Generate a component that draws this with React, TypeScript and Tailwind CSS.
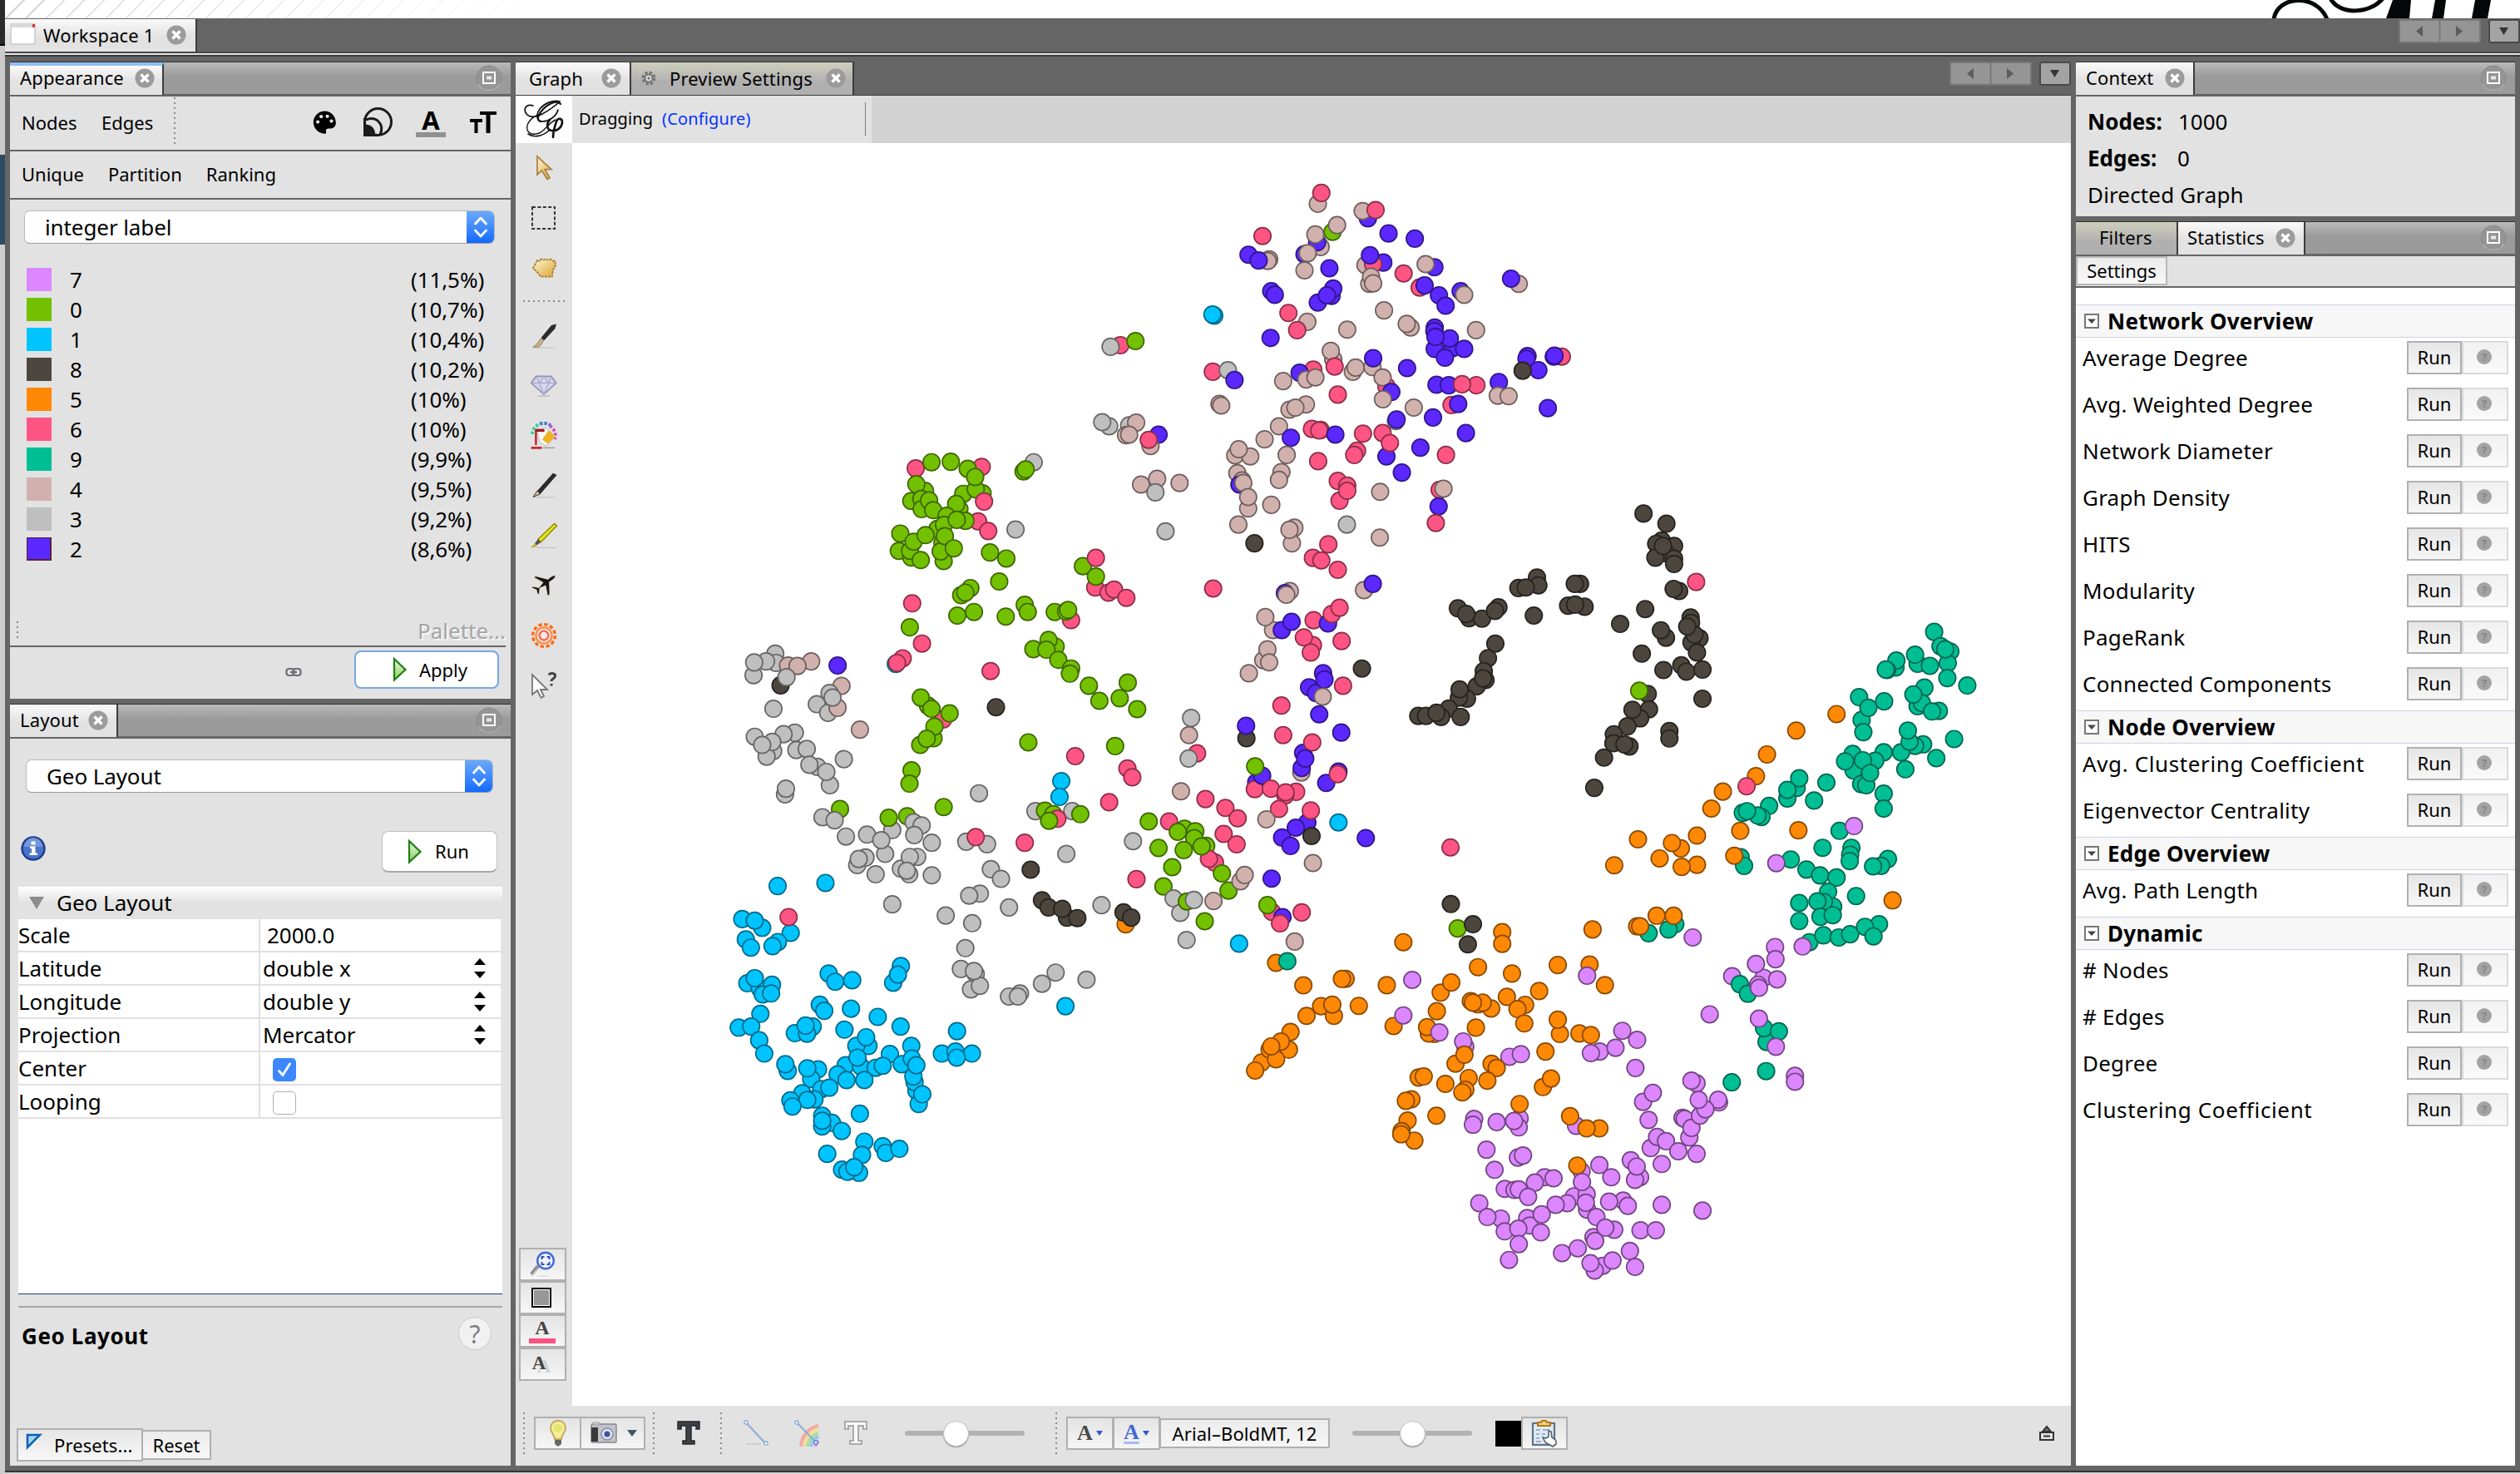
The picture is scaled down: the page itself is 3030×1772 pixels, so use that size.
import React from "react";

type Tile = { x: number; y: number; sx: number; sy: number; nodes: string };

const FILL: Record<string, string> = {
  v: "#dc86ff", g: "#73c000", b: "#00c4ff", k: "#4c463e", o: "#ff8805",
  p: "#ff5584", t: "#00be94", r: "#d1b1ae", s: "#bfbfbf", u: "#5b28ff",
};
const EDGE: Record<string, string> = {
  v: "#714680", g: "#3d6700", b: "#006a8a", k: "#26231f", o: "#8a4a03",
  p: "#8c2f48", t: "#006650", r: "#6f5f5d", s: "#666666", u: "#311689",
};

const TILES: Tile[] = [
  {
    x: 860, y: 500, sx: 2.8, sy: 1.6333,
    nodes: `p675,103 g728,91 g793,90 p897,100 g850,104 g900,152 g835,153 g877,144 g875,120 g706,147 g677,134 g660,167 g694,163 g695,183 g720,166 g822,183 g811,173 g734,185 p905,168 p885,207 p919,226 g779,196 g842,206 g748,222 g770,214 g813,204 g623,231 g618,265 g660,278 g656,265 g668,247 g708,234 g692,283 g765,249 g769,285 g759,266 g773,236 g803,260 g925,268 g980,280 s1011,223 s1072,91 g1038,109 g1045,105
g956,325 g859,338 g828,352 g842,347 g815,392 g871,385 g978,394 g1042,371 g1052,385 g1143,385 p1198,401 g1181,384 g1188,381
p663,368 g655,415 p696,447 b608,487 p631,476 p612,485 p927,501 g1071,458 g1146,453 g1122,440 g1115,459 g1155,479 g1198,496 g1194,506 k945,572 g1054,641 p1212,668
s129,509 s202,467 s205,485 s171,482 s131,484 r245,490 r323,482 r277,491 k220,529 s240,513 u412,490 s196,575 r425,530 s385,544 s342,566 s380,583 r412,573 s395,553 r487,616
s133,630 s268,622 s230,625 s195,658 s173,669 s192,640 s158,646 s273,656 s308,654 s344,689 s317,685 s386,725 s374,699 s433,674 s235,743 s238,732
g716,569 g692,553 p767,596 g728,575 g789,584 g735,633 g738,610 g690,646 g712,634 g661,696 g654,722
s888,741 g769,768 g420,772 s361,788 s402,794 s440,826 s511,822 s596,813 g584,789 g646,786 s668,798 s695,804 s670,823 s729,838 s572,860 s559,833 s478,882 s506,867 s483,870 s540,900 s625,889 s680,866 s655,866 s653,900 s645,893 s729,902 s596,959
s845,836 s915,841 p877,827 p1042,838 b1165,717 b1159,748 s1078,776 g1110,775 g1138,782 s1202,776 p1152,791 g1124,795 g1229,782 s1182,860 k1062,891
s928,890 s962,909 s891,938 s855,942 s989,965 s776,981 s865,996 s842,1045 s827,1086 s877,1096 s861,1126 s891,1119 s871,1090 s989,1140 s1026,1134 s1019,1140 s1100,1115 s1146,1093 s1250,1107 b1179,1159
k1100,951 k1122,965 k1184,985 k1168,968 k1219,986
b210,923 b371,917 b91,988 b158,1005 b133,991 b254,1015 p247,984 b103,1028 b120,1044 b211,1033 b193,1041 b108,1114 b150,1124 b133,1104 b191,1117 b160,1136 b188,1134 b152,1174 b79,1201 b121,1199 b148,1226 b165,1252
b382,1095 b404,1111 b461,1108 b625,1080 b599,1113 b615,1097 b352,1156 b367,1168 b457,1164 b547,1180 b624,1199 b435,1205 b328,1199 b268,1212 b309,1213 b304,1197
b244,1286 b236,1273 b516,1237 b475,1237 b508,1220 b439,1275 b490,1277 b540,1280 b479,1260 b588,1253 b564,1276 b628,1273 b660,1237 b412,1293 b442,1304 b502,1304 b346,1283 b323,1302 b310,1281 b357,1322 b384,1319 b334,1342 b293,1330 b253,1344 b310,1343 b260,1356
b662,1262 b677,1325 b671,1308 b667,1297 b677,1275 b685,1351 b697,1332 b487,1370 b360,1374 b393,1388 b360,1395 b360,1384 b426,1404 b377,1449 b502,1425 b494,1451 b564,1434 b574,1447 b620,1439 b427,1480 b484,1486 b445,1484 b468,1475
b814,1208 b763,1252 b809,1248 b864,1252 b813,1260`,
  },
  {
    x: 1300, y: 180, sx: 2.3758, sy: 1.6,
    nodes: `r676,104 p686,83 u819,132 r804,118 p841,116 p518,166 r684,187 u674,178 g718,158 r669,163 r731,145 u638,201 r647,199 r638,232 u878,161 u953,171 u478,202 r537,211 r533,214 u507,213 u709,228
u543,272 u553,279 u715,281 u720,267 u676,294 u702,280 r812,222 u863,217 p834,220 u825,203 r823,258 r828,244 r834,257 p921,238 u1009,226 r984,220 p967,265 u981,261 u1022,280 u1041,300 u1084,272 r1094,279 r1250,258 u1228,248
p592,314 r646,331 p617,347 r865,309 r760,346 r941,342 r930,335 r1128,347 u541,362 b380,319 b375,317 u1010,342 u1010,383 u1009,349 u1060,382 u1053,363 u1012,360 u1094,383 u1039,400
p112,376 s84,379 g155,368 p376,427 s419,424 u438,443 r395,489 r400,492
r720,403 r713,387 p663,423 u624,429 r577,445 r643,442 r669,438 p724,417 r776,427 r784,419 r832,418 u834,401 p872,455 r861,438 u886,466 r862,480 u931,420 p733,471
u1275,397 u1272,402 u1306,424 k1261,425 p1373,398 u1350,398 u1352,396 u1015,452 u1050,453 p1129,453 p1088,451 r950,496 p1058,491 u1077,489 u1193,447 r1190,473 r1221,474 u1333,497 u1099,545
s899,522 u901,519 u1005,515 u969,573 u916,621 r642,490 r595,500 r612,496 r565,532 r524,557 u599,554 p684,539 p659,537 p680,540 u726,548 p805,546 p861,545 u872,590 p882,564 p788,579 p780,587 p677,599 p1042,587
r440,588 r483,590 r450,576 r587,587 r572,620 r565,635 r446,622 r460,636 u452,644 r463,641 r477,690 r477,668 r449,721 r543,683 p733,637 p760,646 p738,675 p760,656 r854,658 p1024,654 r1035,652 u1021,686 p1013,718
r609,727 r602,757 r595,731 s759,721 k495,757 r853,746 p706,759 p662,785 p686,790 p733,808 p377,844 r596,849 u582,853 r586,856 r808,847 u833,835
r548,924 r526,899 u573,924 u601,908 p664,905 u705,911 p716,893 p738,881 p662,953 p636,938 p656,967 p744,945 r520,982 r532,961 r537,986 r479,1007 u691,1007 u651,1034 u671,1045 u695,1019 r690,1052 p748,1031 k802,998 u680,1086
p572,1069 p577,1126 s314,1093 r308,1126 p331,1161 s307,1171 k472,1132 u471,1108 u743,1121 u634,1160 p660,1140 r629,1198 u630,1189 u640,1171 u735,1196 u700,1218 p733,1201 u500,1217 p496,1230 u517,1204 g497,1186 p542,1229 p614,1235 p583,1242 p584,1236 p565,1268 r529,1288 r285,1234 p355,1249 p412,1266 p447,1286 p407,1316 p444,1336
u646,1294 p656,1271 u613,1304 u574,1323 u598,1339 k658,1320 r662,1372 b735,1294 u813,1324 u544,1402 p1055,1342 p251,1292 g193,1292 g295,1306 g326,1311 g276,1312 g323,1324 g357,1339 p382,1371 p365,1364 g344,1340 g293,1347 g221,1343 g260,1380 g402,1392 g421,1425 r455,1407 r467,1395 r378,1445 g235,1417 s264,1440 s283,1468 g302,1446 s322,1443 g353,1484 s301,1520 s148,1330 p158,1403 s58,1453 o127,1490 k121,1467 k143,1477
p545,1466 g532,1453 u575,1476 p568,1488 p630,1467 b451,1527 r610,1523
s80,532 s60,524 s137,530 r128,549 r157,525 r137,548 u221,548 r198,570 p193,558 r217,633 r171,644 s212,659 r281,641 s241,734 g5,801 p40,842 p42,785 g42,821 p78,852 p94,846 p129,862
g22,1031 g52,1060 g133,1025 g110,1055 g160,1076 g97,1147 p132,1190 p146,1207 p80,1255
k1076,882 k1108,901 k1145,902 k1100,893 k1192,880 k1182,887 k1249,843 k1302,823 k1306,838 k1270,842 k1425,835 k1410,835 k1293,896 k1391,877 k1438,879 k1411,875 k1183,950 k1162,978 k1150,1003 k1155,1020 k1130,1032 k1148,1017 k1102,1056 k1079,1054 k1081,1038 k1050,1075 k963,1089 k985,1089 k1028,1091 k1015,1083 k1084,1091`,
  },
  {
    x: 1620, y: 560, sx: 1.96, sy: 1.568,
    nodes: `k698,90 k752,109 k741,141 k770,151 k728,147 k752,165 k726,173 k770,175 k744,151 k770,185 k782,236 k769,232 p822,219 k702,270 k643,298 k751,324 k739,310 k694,354 k809,286 k830,325 k811,333 k810,296 k818,318 k801,303 k824,352 k745,385 k787,376 k799,388 k837,384 k837,439
k708,430 g688,424 k711,459 k690,476 k672,460 k660,491 k628,506 k627,523 k665,529 k653,525 k605,550 k582,607 k759,500 k759,514
o1153,468 o1058,499 o989,544 o963,585 p941,604 o885,614 o858,646 o926,688 o1063,687 t927,738 t935,754 o912,735 t1045,742 v1011,749 o824,697 o685,704 o786,721 o765,711 o736,740 o824,752 o788,756 o629,753 o1285,819
o683,868 t710,881 o690,868 t773,864 t757,874 o729,848 o769,848 o578,874 v814,889 k244,826 g260,872 k296,864 k284,902
o132,898 o365,879 o365,901 o308,945 v153,969 o93,979 o388,957 o496,941 o571,940 v565,961 o607,979 o-4,967 o27,1018 o220,993 o245,974 o376,1001 o452,990 o419,1016 o401,1024 o308,1015 o339,1023 o319,1012 o291,1009 o296,1012 o417,1051 o211,1028 o303,1059 o501,1071 o496,1044 o547,1070 o574,1073 o109,1056 v132,1036 o205,1071 o192,1070 o188,1058 v217,1068 v278,1095 v273,1085 o255,1127 o276,1110 v382,1114 v409,1109 o467,1104 v595,1104 v574,1107 v632,1097 v648,1065 v683,1082 v679,1135
o340,1127 o352,1135 o330,1159 o286,1154 o278,1176 o271,1181 o231,1165 o168,1153 o180,1151 o461,1171 o480,1155 o151,1194 o138,1197 o210,1225 o142,1234 o128,1254 o158,1272 o127,1260
v299,1231 v296,1242 v352,1237 v406,1230 v404,1247 v393,1235 o406,1203 v539,1244 o525,1226 o594,1249 o564,1249 v328,1289 v402,1304 v414,1300 v347,1327 v594,1318 v552,1330 o542,1319 v622,1341 v668,1309 v690,1341 v678,1346 v682,1321
v465,1341 v486,1343 v442,1351 v371,1363 v394,1365 v404,1364 v426,1378 v534,1377 v564,1373 v553,1350 v518,1390 v491,1393 v565,1402 v562,1389 v650,1385 v617,1387 v661,1395 v741,1393 v741,1316 v715,1286 v730,1265 v751,1273 v780,1292 v823,1297 v806,1266 v790,1229 v795,1231 v811,1248
v837,1404 v311,1390 v362,1419 v330,1416 v371,1443 v424,1418 v430,1432 v458,1411 v403,1438 v456,1445 v404,1467 v381,1497 v587,1416 v629,1440 v580,1454 v608,1436 v584,1461 v506,1484 v543,1475 v691,1441 v727,1441 v666,1480 v678,1510 v602,1508 v583,1517 v573,1503 v625,1498
v697,1199 v720,1182 v710,1233 v823,1164 v811,1159 v876,1200 v874,1195 v831,1225 v844,1213 v828,1195 v854,1034 v1055,1150 v1055,1161 t906,1162 t987,1141 t988,1086 t982,1060 v970,1042 t1017,1066 v1010,1095 v907,962 t925,977 t944,995 v981,965 v963,939 v1008,907 v1009,930 v968,978 v970,984 v1013,968
t1089,898 v1073,906 t1122,885 t1158,889 t1185,883 t1253,864 t1220,869 t1240,887
t1383,313 t1398,340 t1421,350 t1415,372 t1409,346 t1344,373 t1338,356 t1373,377 t1414,400 t1461,414 t1292,380 t1294,367 t1272,385 t1269,384 t1206,436 t1265,444 t1212,479 t1228,456 t1216,502 t1360,418 t1344,453 t1354,447 t1334,431 t1394,462 t1378,463 t1430,515 t1388,551 t1315,572 t1357,525 t1338,528 t1305,540 t1325,520 t1321,499 t1264,540 t1191,543 t1244,556 t1193,574 t1173,557 t1215,555 t1211,600 t1223,602 t1232,579 t1264,618 t1264,646
t1059,607 t1065,589 t1037,627 t1037,611 t1129,597 t1100,631 t994,641 t976,662 t932,654 t967,659 t942,651 t1160,688 v1194,679 t1120,720 t1188,720 t1185,733 t1184,745 t1274,741 t1258,754 t1239,755 t1082,761 t1114,772 t1153,776 t1133,803 t1199,811 t1065,824 t1145,831 t1123,822 t1108,821 t1115,850 t1144,847 t1065,858`,
  },
  {
    x: 0, y: 0, sx: 0.5175, sy: 0.5175,
    nodes: `o794,599 t801,598 o811,613 o835,609 o822,626 o830,632 o829,625 o813,632 o803,642 o802,653 o797,648 o785,661 o790,653 o781,666 o794,659 o791,651`,
  },
];

function Graph() {
  const dots: React.ReactElement[] = [];
  TILES.forEach((t, i) =>
    t.nodes.split(/\s+/).forEach((n, j) => {
      const c = n[0];
      const [a, b] = n.slice(1).split(",").map(Number);
      dots.push(
        <circle key={`${i}-${j}`} cx={t.x + a / t.sx - 688} cy={t.y + b / t.sy - 172} r={10.2} fill={FILL[c]} stroke={EDGE[c]} strokeWidth={1.7} />
      );
    })
  );
  return <svg width="1802" height="1518" className="block">{dots}</svg>;
}

const Close = () => (
  <svg width="24" height="24" viewBox="0 0 24 24" className="shrink-0">
    <circle cx="12" cy="12" r="11.5" fill="#9b9b9b" />
    <path d="M7.5 7.5l9 9M16.5 7.5l-9 9" stroke="#fff" strokeWidth="3.4" />
  </svg>
);

const Maximize = () => (
  <svg width="32" height="32" viewBox="0 0 32 32" className="shrink-0">
    <circle cx="16" cy="16" r="15" fill="#959595" stroke="#8a8a8a" />
    <path d="M3 23a15 15 0 0 0 26 0" fill="none" stroke="#b0b0b0" strokeWidth="1.5" />
    <rect x="9" y="9" width="14" height="13" fill="none" stroke="#fff" strokeWidth="2" />
    <rect x="13" y="13.5" width="6" height="4" fill="#e8e8e8" />
  </svg>
);

function Tab({ label, w, focus, idle, x = "pl-[13px]", gap = "gap-[11px]", icon, close = true }: { label: string; w: string; focus?: boolean; idle?: boolean; x?: string; gap?: string; icon?: React.ReactNode; close?: boolean }) {
  return (
    <div className={`${w} ${x} flex h-[39px] shrink-0 items-center border-r-2 border-[#3c3c3c] ${gap} ${idle ? "bg-linear-to-b from-[#cfcfbd] to-[#b0b0b0] to-60%" : "bg-linear-to-b from-[#fafafa] to-[#e2e2e2] to-55%"} ${focus ? "border-t-4 border-t-[#8fbdf5] pb-[5px]" : "pb-px"}`}>
      {icon}
      <span className="-mt-px text-[22px] leading-none tracking-[0.15px]">{label}</span>
      {close && <Close />}
    </div>
  );
}

function PanelBar({ children }: { children: React.ReactNode }) {
  return (
    <div className="h-[42px] shrink-0 border-b-[3px] border-[#656565] bg-[#9b9b9b]">
      <div className="flex h-[39px] items-center border-t border-[#333] bg-linear-to-b from-[#bababa] to-[#9b9b9b] to-45%">
        {children}
        <div className="flex-1" />
        <div className="mr-[10px]"><Maximize /></div>
      </div>
    </div>
  );
}

function NavButtons() {
  return (
    <div className="flex items-start gap-[9px]">
      <svg width="99" height="29" viewBox="0 0 99 29">
        <rect x="1" y="1" width="97" height="27" rx="2" fill="#959595" stroke="#777" strokeWidth="2" />
        <path d="M49.500 0V29" stroke="#777" strokeWidth="2" />
        <path d="M29 8v13l-8-6.500zM69 8v13l8-6.500z" fill="#5c5c5c" />
      </svg>
      <svg width="38" height="29" viewBox="0 0 38 29">
        <rect x="1" y="1" width="36" height="27" rx="2" fill="#a3a3a3" stroke="#4a4a4a" strokeWidth="2" />
        <path d="M13 10h11l-5.500 9z" fill="#333" />
      </svg>
    </div>
  );
}

function Combo({ label, cls }: { label: string; cls: string }) {
  return (
    <div className={`${cls} flex h-10 items-stretch overflow-hidden rounded-[7px] border border-[#b9b9b9] border-b-[#9a9a9a] bg-white`}>
      <div className="flex flex-1 items-center pb-px pl-6 text-[26px] leading-none tracking-[-0.1px]">{label}</div>
      <div className="-my-px -mr-px flex w-[34px] items-center justify-center bg-linear-to-b from-[#6cabfa] to-[#0a66ff]">
        <svg width="18" height="26" viewBox="0 0 18 26" fill="none" stroke="#fff" strokeWidth="2.800" strokeLinecap="round" strokeLinejoin="round">
          <path d="M2.500 9L9 2l6.500 7M2.500 17L9 24l6.500-7" />
        </svg>
      </div>
    </div>
  );
}

const Play = () => (
  <svg width="20" height="30" viewBox="0 0 20 30">
    <defs><linearGradient id="play" x1="0" y1="0" x2="0" y2="1"><stop offset="0" stopColor="#f0fae8" /><stop offset="1" stopColor="#86cc58" /></linearGradient></defs>
    <path d="M2 2l13.500 13L2 27.500z" fill="url(#play)" stroke="#1f8010" strokeWidth="2.200" />
  </svg>
);

const LEGEND = [
  ["bg-[#dc86ff]", "7", "(11,5%)"], ["bg-[#73c000]", "0", "(10,7%)"], ["bg-[#00c4ff]", "1", "(10,4%)"],
  ["bg-[#4c463e]", "8", "(10,2%)"], ["bg-[#ff8805]", "5", "(10%)"], ["bg-[#ff5584]", "6", "(10%)"],
  ["bg-[#00be94]", "9", "(9,9%)"], ["bg-[#d1b1ae]", "4", "(9,5%)"], ["bg-[#bfbfbf]", "3", "(9,2%)"],
  ["bg-[#5b28ff] border border-[#5a2038] border-r-2 border-b-2", "2", "(8,6%)"],
];

function Appearance() {
  return (
    <section className="flex h-[766px] flex-col bg-[#e2e2e2]">
      <PanelBar><Tab label="Appearance" w="w-[185px]" x="pl-[12px]" gap="gap-[13px]" focus /></PanelBar>
      <div className="flex h-[66px] shrink-0 items-center border-b-2 border-[#656565] pb-[2px] pl-[14px] text-[22px]">
        <span className="w-[96px]">Nodes</span>
        <span className="w-[87px]">Edges</span>
        <span className="h-[60px] w-[2px] bg-[repeating-linear-gradient(to_bottom,#8a8a8a_0px,#8a8a8a_2px,transparent_2px,transparent_6px)]" />
        <div className="ml-[162px] flex items-center">
          <svg width="34" height="34" viewBox="0 0 16 16">
            <path d="M8 1.600a6.500 6.300 0 1 0 .8 12.800c.6-.4-.1-1.300.1-2 .3-.9 1.200-.9 2.300-.9 2 0 3.300-1.200 3.300-3.200C14.500 4.300 11.600 1.600 8 1.600z" fill="#000" />
            <g fill="#e2e2e2"><circle cx="4.300" cy="7.800" r="1" /><circle cx="6.200" cy="4.800" r="1" /><circle cx="9.700" cy="4.600" r="1" /><circle cx="12" cy="7.300" r="1" /></g>
          </svg>
          <svg width="38" height="38" viewBox="0 0 38 38" className="ml-[28px]">
            <circle cx="19.500" cy="18.500" r="16" fill="none" stroke="#1b1b1b" strokeWidth="3" />
            <path d="M3 14v21h18" fill="none" stroke="#1b1b1b" strokeWidth="2" />
            <path d="M5 16c12-5 23 5 17 18" fill="none" stroke="#1b1b1b" strokeWidth="3" />
            <path d="M3 22c8-1 14 4 13 14H3z" fill="#1b1b1b" />
          </svg>
          <div className="ml-[27px] flex w-9 flex-col items-center">
            <span className="text-[31px] font-bold leading-[29px]">A</span>
            <span className="h-[6px] w-full bg-[#919191]" />
          </div>
          <svg width="34" height="32" viewBox="0 0 34 32" className="ml-[28px]">
            <path d="M1 12h15v4h-5.500v13h-4V16H1zM13 3h20v4h-7.500v22h-5V7H13z" fill="#000" />
          </svg>
        </div>
      </div>
      <div className="flex h-[58px] shrink-0 items-center gap-[29px] border-b-2 border-[#656565] pb-[2px] pl-[14px] text-[22px]">
        <span>Unique</span><span>Partition</span><span>Ranking</span>
      </div>
      <Combo label="integer label" cls="ml-[17px] mt-[13px] w-[566px] shrink-0" />
      <div className="mt-[29px] flex flex-col gap-2 pl-5 text-[26px]">
        {LEGEND.map(([c, l, p]) => (
          <div key={l} className="flex h-7 items-center">
            <span className={`${c} h-7 w-[30px]`} />
            <span className="ml-[22px] w-[410px] leading-none">{l}</span>
            <span className="leading-none tracking-[-0.1px]">{p}</span>
          </div>
        ))}
      </div>
      <div className="flex-1" />
      <div className="mr-[6px] flex h-9 shrink-0 items-start justify-between border-b-2 border-[#656565] pl-2">
        <span className="mt-[5px] h-[20px] w-[2px] bg-[repeating-linear-gradient(to_bottom,#8a8a8a_0px,#8a8a8a_2px,transparent_2px,transparent_6px)]" />
        <span className="text-[26px] leading-[32px] text-[#a5a5a5] [text-shadow:2px_2px_0_#f6f6f6]">Palette...</span>
      </div>
      <div className="flex h-[62px] shrink-0 items-center justify-end pr-[14px]">
        <svg width="20" height="14" viewBox="0 0 20 14" className="mr-[63px]" fill="none" stroke="#6c6f75" strokeWidth="2.200">
          <rect x="1.500" y="2" width="9" height="8" rx="3" /><rect x="9.500" y="2" width="9" height="8" rx="3" /><path d="M6 6h8" />
        </svg>
        <div className="-mt-2 flex h-[46px] w-[174px] items-center justify-center gap-3 rounded-[8px] border-2 border-[#76a8e4] bg-white pl-2 text-[22px]"><Play />Apply</div>
      </div>
    </section>
  );
}

const Spin = () => (
  <svg width="16" height="24" viewBox="0 0 16 24"><path d="M8 0l7 8H1zM8 24l7-8H1z" fill="#000" /></svg>
);

function Row({ k, children }: { k: string; children: React.ReactNode }) {
  return (
    <div className="flex h-10 border-b-2 border-[#e0e0e0] text-[26px] leading-[38px]">
      <div className="w-[291px] border-r-2 border-[#e0e0e0]">{k}</div>
      <div className="flex flex-1 items-center justify-between border-r-2 border-[#e6e6e6] pr-[17px]">{children}</div>
    </div>
  );
}

function LayoutPanel() {
  return (
    <section className="mt-[6px] flex h-[916px] flex-col bg-[#e2e2e2]">
      <PanelBar><Tab label="Layout" w="w-[130px]" x="pl-[12px]" /></PanelBar>
      <Combo label="Geo Layout" cls="ml-[19px] mt-[25px] w-[562px] shrink-0" />
      <div className="flex h-[113px] shrink-0 items-start justify-between pl-[13px] pr-[16px] pt-[46px]">
        <svg width="30" height="30" viewBox="0 0 30 30" className="mt-[6px]">
          <circle cx="15" cy="15" r="13.500" fill="#4a74c8" stroke="#1f3f8f" strokeWidth="2.500" />
          <path d="M4 13a11 11 0 0 1 22 0z" fill="#86a6e0" opacity=".7" />
          <path d="M12.500 6.500h5v4h-5zM11 12.500h6.500v8H20V23h-9.500v-2.500h2.500v-5.500h-2z" fill="#fff" />
        </svg>
        <div className="flex h-[50px] w-[139px] items-center justify-center gap-[13px] rounded-[8px] border border-[#c0c0c0] border-b-2 border-b-[#a8a8a8] bg-white pr-[3px] text-[22px]"><Play />Run</div>
      </div>
      <div className="ml-[10px] flex h-[490px] w-[582px] shrink-0 flex-col border-b border-[#1c3f7c] bg-white">
        <div className="flex h-[39px] items-center gap-[15px] bg-linear-to-b from-white to-[#e2e2e2] to-50% pb-px pl-[13px] text-[26px]">
          <svg width="18" height="15" viewBox="0 0 18 15"><path d="M0 0h18L9 15z" fill="#8c8c8c" /></svg>Geo Layout
        </div>
        <Row k="Scale"><span className="pl-2">2000.0</span></Row>
        <Row k="Latitude"><span className="pl-[3px]">double x</span><Spin /></Row>
        <Row k="Longitude"><span className="pl-[3px]">double y</span><Spin /></Row>
        <Row k="Projection"><span className="pl-[3px]">Mercator</span><Spin /></Row>
        <Row k="Center">
          <span className="ml-[15px] mt-[3px] flex h-7 w-7 items-center justify-center rounded-[5px] bg-[#3b88fd]">
            <svg width="18" height="18" viewBox="0 0 18 18" fill="none" stroke="#fff" strokeWidth="2.800" strokeLinecap="round"><path d="M2.500 10.500l4.500 5L15.500 2" /></svg>
          </span>
        </Row>
        <Row k="Looping"><span className="ml-[15px] mt-[3px] h-7 w-7 rounded-[5px] border border-[#b0b0b0] bg-white" /></Row>
      </div>
      <div className="ml-[10px] mt-[14px] flex h-[147px] w-[582px] shrink-0 items-start justify-between border-t-2 border-[#a6a6a6] pl-[4px] pr-[13px] pt-[11px]">
        <span className="mt-[5px] text-[26px] font-bold leading-[36px] tracking-[0.6px]">Geo Layout</span>
        <span className="flex h-10 w-10 items-center justify-center rounded-full border border-[#cbcbcb] bg-[#f1f1f1] text-[30px] text-[#808080]">?</span>
      </div>
      <div className="flex items-center pl-2 text-[22px]">
        <div className="flex h-10 w-[152px] items-center gap-[14px] border-2 border-[#b0b0b0] bg-linear-to-b from-[#e6e6e6] to-[#f7f7f7] pl-[9px]">
          <svg width="20" height="24" viewBox="0 0 20 24" className="-mt-3"><path d="M2 6h15L2 21z" fill="#a4d4f4" stroke="#0a60b4" strokeWidth="2.500" /></svg>
          <span className="tracking-[0.1px]">Presets...</span>
        </div>
        <div className="-ml-0.5 flex h-9 w-[84px] items-center justify-center border-2 border-[#b0b0b0] bg-linear-to-b from-[#ececec] to-[#f7f7f7]">Reset</div>
      </div>
    </section>
  );
}

const ToolIcon = ({ children }: { children: React.ReactNode }) => (
  <svg width="34" height="34" viewBox="0 0 17 17" className="mb-[26px] shrink-0">{children}</svg>
);

function ToolStrip() {
  return (
    <div className="flex w-[68px] shrink-0 flex-col items-center bg-[#e2e2e2] pt-[13px]">
      <ToolIcon>
        <defs><linearGradient id="gold" x1="0" y1="0" x2="1" y2="1"><stop offset="0" stopColor="#fff6d8" /><stop offset="1" stopColor="#d9a62e" /></linearGradient></defs>
        <path d="M4.500 1.500v11l2.700-2.600 3.300 5.300 1.500-.9-3-5h4z" fill="url(#gold)" stroke="#ad8246" strokeWidth=".9" />
      </ToolIcon>
      <ToolIcon><rect x="1.500" y="2" width="13.500" height="13" fill="none" stroke="#333" strokeWidth="1" strokeDasharray="2 1.200" /></ToolIcon>
      <ToolIcon><path d="M4.500 4l1.500.4.8-1.200 1.600.6 1.300-.6 1.500.6 1.600-.5 1 1 1.400-.1.300 3-1.500 2.600-.6 4H6.500L4.500 11 2 8.800z" fill="url(#gold)" stroke="#a8803c" strokeWidth=".9" strokeDasharray="1.600 .5" /></ToolIcon>
      <span className="mb-[24px] -mt-[4px] h-[2px] w-[50px] bg-[repeating-linear-gradient(to_right,#8a8a8a_0px,#8a8a8a_2px,transparent_2px,transparent_6px)]" />
      <ToolIcon>
        <path d="M2 15.500h13" stroke="#c4c4c4" strokeWidth=".6" />
        <path d="M16 1.200L13 2 6.800 9.500l1.700 1.800L15.200 4z" fill="#2a2a2a" />
        <path d="M6.500 10L4.800 12.500c-1 .5-1 1.700-2.800 2.500 2 .4 4 .2 4.900-1.500l1.300-2z" fill="#cdb083" stroke="#7a715e" strokeWidth=".4" />
      </ToolIcon>
      <ToolIcon>
        <path d="M.8 6.700l3-4h9L15.900 6.700 8.500 13.500z" fill="#d4d4ee" stroke="#8d8fb0" strokeWidth=".8" />
        <path d="M.8 6.700h15M5.500 6.700l3 6.800 3-6.800M4.200 2.700L5.500 6.700l3-4 3 4 1-4" fill="none" stroke="#a9aacb" strokeWidth=".6" />
        <path d="M5 14.500h7" stroke="#bbb" strokeWidth=".7" />
      </ToolIcon>
      <ToolIcon>
        <path d="M1.500 7.500a7 6.500 0 0 1 7-6.500" fill="none" stroke="#35cf9a" strokeWidth="1.900" strokeDasharray="1.700 1" />
        <path d="M6 1.200a7 6.500 0 0 1 6.500 1" fill="none" stroke="#4f74d8" strokeWidth="1.900" strokeDasharray="1.700 1" />
        <path d="M12 2.500a6.500 6.500 0 0 1 3 8" fill="none" stroke="#d04fc0" strokeWidth="1.900" strokeDasharray="1.700 1" />
        <path d="M3.700 5v9M.8 15.700h6.500" stroke="#c22b35" strokeWidth="1.300" />
        <path d="M4.500 6l5-2.500 6 5-5.500 6L6 12.500z" fill="#f8f8f4" stroke="#bbb" strokeWidth=".5" />
        <path d="M3.300 5.200h5.500" stroke="#a31622" strokeWidth="1.700" />
        <path d="M7.500 10.800l3.700-5.600 4.300 3.600-4.700 4.400z" fill="#f0b423" />
        <path d="M8 15.700h7" stroke="#999" strokeWidth=".7" />
      </ToolIcon>
      <ToolIcon>
        <path d="M2 15.500h13" stroke="#c4c4c4" strokeWidth=".6" />
        <path d="M16.300 2L14 .9 4.500 11.500l1.800 2z" fill="#2b2b2b" />
        <path d="M4.500 11.500l1.800 2-4.300 1.700z" fill="#d9c08d" stroke="#333" strokeWidth=".5" />
      </ToolIcon>
      <ToolIcon>
        <path d="M3 15.700h13" stroke="#c4c4c4" strokeWidth=".6" />
        <path d="M16.300 2.500L14.800 1.200 5 10.500l1.600 2z" fill="#e8e010" stroke="#8c8a10" strokeWidth=".7" />
        <path d="M5 10.500l1.600 2L4 14.300l-1-1.200z" fill="#555" />
        <path d="M1 15.500l2-1.800.8.900z" fill="#d8d000" stroke="#a8a000" strokeWidth=".5" />
      </ToolIcon>
      <ToolIcon>
        <path d="M15.500 2.500c-1.500-.4-3.200 1-4.500 2.200L3.500 2.800l-1 .8 5.500 3L5.500 9.800 2 9l-1 .7 3 1.300.8 3 .9-.7.3-3.300L9.500 8.500l1.200 6.300 1.300-1-.2-7.500c1.500-1 3.700-2.300 3.700-3.800z" fill="#151515" stroke="#e9dfc2" strokeWidth=".4" />
      </ToolIcon>
      <ToolIcon>
        <circle cx="8.500" cy="8.500" r="6.700" fill="none" stroke="#ff6a10" strokeWidth="1.700" strokeDasharray="2.200 1.300" />
        <circle cx="8.500" cy="8.500" r="4.800" fill="none" stroke="#ff8a40" strokeWidth="1.100" />
        <circle cx="8.500" cy="8.500" r="2.700" fill="#fbe9e2" stroke="#ff5a3c" strokeWidth="1" />
      </ToolIcon>
      <ToolIcon>
        <path d="M1.500 2v12l3-2.500 2.300 4.500 1.700-1-2-4h4z" fill="#fafafa" stroke="#777" strokeWidth=".9" />
        <path d="M11.500 2.300c.5-1.400 3.800-1.500 3.800.5 0 1.600-2.300 1.500-2.300 3.200M13 7.500v1.300" fill="none" stroke="#444" strokeWidth="1.500" />
      </ToolIcon>
      <div className="flex-1" />
      <div className="mb-[30px] mr-1 flex flex-col">
        <MiniButton>
          <svg width="38" height="34" viewBox="0 0 38 34"><path d="M14 19L6 29" stroke="#8d8d8d" strokeWidth="4.500" /><path d="M14 22L6 31" stroke="#c9c9c9" strokeWidth="1.500" /><path d="M13 31h14" stroke="#d0d0d0" /><circle cx="23" cy="12.500" r="9.800" fill="#eef3ff" stroke="#4468d8" strokeWidth="2.400" /><path d="M18.500 11V8h3M24.500 8h3v3M27.500 14v3h-3M21.500 17h-3v-3" fill="none" stroke="#2f50c0" strokeWidth="2" /></svg>
        </MiniButton>
        <MiniButton><span className="mr-0.5 h-6 w-6 border-2 border-black bg-[#979797] ring-1 ring-inset ring-white" /></MiniButton>
        <MiniButton>
          <div className="flex flex-col items-center"><span className="font-['Liberation_Serif'] text-[24px] font-bold leading-[20px] text-[#444]">A</span><span className="mt-[3px] h-[6px] w-8 bg-[#ff5080]" /></div>
        </MiniButton>
        <MiniButton><span className="mb-1 mr-2 font-['Liberation_Serif'] text-[23px] font-bold leading-none text-[#444] [text-shadow:6px_4px_0_#d0d0d0]">A</span></MiniButton>
      </div>
    </div>
  );
}

const MiniButton = ({ children }: { children: React.ReactNode }) => (
  <div className="flex h-10 w-[57px] items-center justify-center border-2 border-[#b0b0b0] bg-linear-to-b from-[#e4e4e4] to-[#f6f6f6]">{children}</div>
);

const Dots = ({ cls }: { cls: string }) => <span className={`${cls} h-[50px] w-[2px] shrink-0 bg-[repeating-linear-gradient(to_bottom,#8a8a8a_0px,#8a8a8a_2px,transparent_2px,transparent_6px)]`} />;

const Slider = ({ cls, thumb }: { cls: string; thumb: string }) => (
  <div className={`${cls} flex h-[6px] w-[144px] shrink-0 items-center rounded-full bg-[#b2b2b2]`}>
    <span className={`${thumb} h-[31px] w-[31px] rounded-full border border-[#c4c4c4] bg-white shadow-[0_1px_1px_#999]`} />
  </div>
);

function BottomBar() {
  return (
    <div className="flex h-[72px] shrink-0 items-center bg-[#e2e2e2] pb-[6px]">
      <Dots cls="ml-[9px]" />
      <div className="ml-[11px] flex h-10 w-[134px] border-2 border-[#b0b0b0] bg-linear-to-b from-[#e4e4e4] to-[#f6f6f6]">
        <div className="flex w-[55px] items-center justify-center border-r-2 border-[#b0b0b0]">
          <svg width="24" height="34" viewBox="0 0 24 34"><path d="M12 2C6 2 3 6 3 11c0 5 5 8 5 13h8c0-5 5-8 5-13 0-5-3-9-9-9z" fill="#f0ef9a" stroke="#c9a562" strokeWidth="2" /><circle cx="12" cy="11" r="5" fill="#dfe05a" opacity=".7" /><path d="M8 25h8v5l-4 3-4-3z" fill="#666" /></svg>
        </div>
        <div className="flex flex-1 items-center gap-[12px] pl-[10px]">
          <svg width="33" height="28" viewBox="0 0 33 28"><rect x="2" y="3" width="30" height="22" rx="1.500" fill="#c2c2cc" stroke="#888" strokeWidth="1.500" /><rect x="2" y="7" width="8" height="17" fill="#3a3a3a" /><rect x="4" y="1" width="8" height="3" fill="#ccc" stroke="#999" strokeWidth=".8" /><circle cx="21" cy="15" r="7" fill="#dfe2f0" stroke="#8a8fa8" strokeWidth="1.500" /><circle cx="21" cy="15" r="3.500" fill="#3d559c" /></svg>
          <svg width="12" height="8" viewBox="0 0 12 8"><path d="M0 0h12L6 8z" fill="#4c555c" /></svg>
        </div>
      </div>
      <Dots cls="ml-[9px]" />
      <svg width="30" height="32" viewBox="0 0 30 32" className="ml-[26px]"><path d="M2 2h26v9h-4V7h-6v18h4v4H8v-4h4V7H6v4H2z" fill="#3d4046" stroke="#26282c" strokeWidth="1.500" /></svg>
      <Dots cls="ml-[23px]" />
      <svg width="32" height="34" viewBox="0 0 32 34" className="ml-[25px]"><path d="M3 3l25 27" stroke="#8fb0d4" strokeWidth="2.200" /><circle cx="4" cy="4" r="2.200" fill="#fff" stroke="#7aa4d0" strokeWidth="1.200" /><circle cx="28" cy="29" r="2.200" fill="#fff" stroke="#7aa4d0" strokeWidth="1.200" /><path d="M4 30h18" stroke="#cfcfcf" strokeWidth="2" /></svg>
      <svg width="32" height="34" viewBox="0 0 32 34" className="ml-[29px]" fill="none">
        <path d="M9 33Q11 13 30 8" stroke="#f3a9a2" strokeWidth="4" /><path d="M13 33Q15 17 30 12" stroke="#f3dd9a" strokeWidth="4" /><path d="M17 33Q19 21 30 17" stroke="#a8dfa4" strokeWidth="4" /><path d="M21 33Q23 25 30 21" stroke="#9dc4ee" strokeWidth="4" /><path d="M26 33l4-7" stroke="#c9a4dc" strokeWidth="4" />
        <path d="M3 3l25 26" stroke="#8fb0d4" strokeWidth="2.200" /><circle cx="4" cy="4" r="2.200" fill="#fff" stroke="#7aa4d0" strokeWidth="1.200" /><circle cx="27" cy="28" r="2.200" fill="#fff" stroke="#4a78c8" strokeWidth="1.200" />
      </svg>
      <svg width="30" height="32" viewBox="0 0 30 32" className="ml-[28px]"><path d="M2 2h26v9h-4V7h-6v18h4v4H8v-4h4V7H6v4H2z" fill="#fafafa" stroke="#aaa" strokeWidth="2" /></svg>
      <Slider cls="ml-[44px]" thumb="ml-[46px]" />
      <Dots cls="ml-[37px]" />
      <div className="ml-[11px] flex items-center">
        <div className="flex h-10 w-[57px] items-center justify-center gap-1 border-2 border-[#b0b0b0] bg-linear-to-b from-[#e4e4e4] to-[#f6f6f6]">
          <span className="font-['Liberation_Serif'] text-[26px] font-bold leading-none text-[#4a4a4a]">A</span>
          <svg width="8" height="6" viewBox="0 0 8 6"><path d="M0 0h8L4 6z" fill="#3059c8" /></svg>
        </div>
        <div className="-ml-px flex h-10 w-[57px] items-center justify-center gap-1 border-2 border-[#b0b0b0] bg-linear-to-b from-[#e4e4e4] to-[#f6f6f6]">
          <span className="border-b-[3px] border-[#a9bdf0] font-['Liberation_Serif'] text-[26px] font-bold leading-[22px] text-[#4468d4]">A</span>
          <svg width="8" height="6" viewBox="0 0 8 6"><path d="M0 0h8L4 6z" fill="#3059c8" /></svg>
        </div>
        <div className="-ml-px flex h-9 w-[205px] items-center justify-center border-2 border-[#b0b0b0] bg-linear-to-b from-[#ececec] to-[#f6f6f6] text-[22px] tracking-[0.1px]">Arial–BoldMT, 12</div>
      </div>
      <Slider cls="ml-[27px]" thumb="ml-[57px]" />
      <span className="ml-[28px] h-[31px] w-[31px] bg-black" />
      <div className="flex h-10 w-[56px] items-center justify-center border-2 border-[#b0b0b0] bg-linear-to-b from-[#e4e4e4] to-[#f6f6f6]">
        <svg width="34" height="34" viewBox="0 0 34 34"><rect x="3" y="5" width="26" height="26" fill="#dcebf7" stroke="#5f7488" strokeWidth="2.200" /><path d="M9 7V4h4l1-2h5l1 2h4v4H9z" fill="#f4d28c" stroke="#b47a14" strokeWidth="2" /><path d="M7 13h5m3 0h8M7 18h4m3 0h4M7 23h4m-4 4h6" stroke="#9fb0be" strokeWidth="2" /><path d="M22 14l3 1 1 7c3 2 6 3 5 8l-4 3-9-5-3-6 4 1 3-2z" fill="#fbfbfb" stroke="#555f68" strokeWidth="1.600" /></svg>
      </div>
      <div className="flex-1" />
      <svg width="20" height="20" viewBox="0 0 20 20" className="mr-[19px]" fill="none" stroke="#333" strokeWidth="2"><path d="M5 8l5-6 5 6z" fill="#777" /><path d="M2 9h16v9H2zM6 13.500h8" /></svg>
    </div>
  );
}

function Center() {
  return (
    <section className="ml-[6px] flex w-[1870px] flex-col">
      <div className="flex h-[41px] shrink-0 items-start justify-between border-b border-[#3c3c3c] bg-[#656565]">
        <div className="flex border-t border-[#333]">
          <Tab label="Graph" w="w-[139px]" x="pl-[16px]" gap="gap-[22px]" />
          <Tab label="Preview Settings" w="w-[268px]" x="pl-[12px]" gap="gap-[16px]" idle icon={
            <svg width="18" height="18" viewBox="0 0 18 18"><circle cx="9" cy="9" r="6.500" fill="none" stroke="#777" strokeWidth="4" strokeDasharray="3 2.100" /><circle cx="9" cy="9" r="4.500" fill="#ddd" stroke="#777" strokeWidth="2" /><circle cx="9" cy="9" r="1.500" fill="#666" /></svg>
          } />
        </div>
        <NavButtons />
      </div>
      <div className="flex h-[57px] shrink-0">
        <div className="flex w-[68px] items-center justify-center bg-white">
          <svg width="50" height="48" viewBox="0 0 50 48" fill="none" stroke="#111" strokeLinecap="round">
            <path d="M12 7C3 4 0 12 4 17c4 5 12 4 19 0C32 12 40 6 44 2c-9-2-18 2-24 9-5 7-4 15 3 15 8 0 17-6 19-14" strokeWidth="1.700" />
            <path d="M45 5C40-1 26 6 19 18c-2 4-1 8 3 8" strokeWidth="2.200" />
            <path d="M21 17C10 20 3 29 5 36c3 8 14 6 20 0 5-5 8-9 14-12" strokeWidth="1.400" />
            <path d="M6 41c7 5 18 3 26-5" strokeWidth="1.600" />
            <path d="M32 24c-4 4-4 12 2 13 8 1 13-5 13-10s-5-6-7-1c-2 6-4 13-4 19" strokeWidth="2.600" />
          </svg>
        </div>
        <div className="flex w-[360px] items-center bg-[#e2e2e2] pb-px pl-[8px] text-[20px] tracking-[0.15px]">
          <span className="w-[100px]">Dragging</span><span className="text-[#0433ff]">(Configure)</span>
          <span className="ml-auto mr-[7px] h-10 w-px bg-[#777]" />
        </div>
        <div className="flex-1 bg-[#d2d2d2]" />
      </div>
      <div className="flex h-[1518px] shrink-0">
        <ToolStrip />
        <div className="flex-1 bg-white"><Graph /></div>
      </div>
      <BottomBar />
    </section>
  );
}

const STATS: [string, string[]][] = [
  ["Network Overview", ["Average Degree", "Avg. Weighted Degree", "Network Diameter", "Graph Density", "HITS", "Modularity", "PageRank", "Connected Components"]],
  ["Node Overview", ["Avg. Clustering Coefficient", "Eigenvector Centrality"]],
  ["Edge Overview", ["Avg. Path Length"]],
  ["Dynamic", ["# Nodes", "# Edges", "Degree", "Clustering Coefficient"]],
];

function RightColumn() {
  return (
    <section className="ml-[6px] flex w-[528px] flex-col">
      <PanelBar><Tab label="Context" w="w-[143px]" x="pl-[12px]" gap="gap-[14px]" /></PanelBar>
      <div className="flex h-[144px] shrink-0 flex-col gap-[9px] bg-[#e2e2e2] pl-[14px] pt-[13px] text-[26px] leading-[35px]">
        <div className="flex"><span className="w-[109px] font-bold">Nodes:</span>1000</div>
        <div className="flex"><span className="w-[108px] font-bold">Edges:</span>0</div>
        <div className="tracking-[0.15px]">Directed Graph</div>
      </div>
      <div className="mt-[6px]"><PanelBar>
        <Tab label="Filters" w="w-[123px]" x="pl-[28px]" idle close={false} />
        <Tab label="Statistics" w="w-[153px]" x="pl-[11px]" gap="gap-[13px]" />
      </PanelBar></div>
      <div className="h-[38px] shrink-0 border-b-2 border-[#656565] bg-[#e2e2e2]">
        <div className="flex h-[35px] w-[110px] items-center justify-center border-2 border-[#b8b8b8] bg-linear-to-b from-[#eaeaea] to-[#f9f9f9] text-[22px]">Settings</div>
      </div>
      <div className="flex-1 bg-white pt-[20px]">
        {STATS.map(([title, items]) => (
          <div key={title}>
            <div className="flex h-10 items-center gap-[10px] border-y border-[#cfd3e8] bg-[#f7f7f7] pl-[10px] text-[26px] font-bold tracking-[0.25px]">
              <svg width="18" height="18" viewBox="0 0 18 18"><rect x="1" y="1" width="16" height="16" fill="#fff" stroke="#777" strokeWidth="2" /><path d="M4 6.500h10L9 12z" fill="#444" /></svg>
              {title}
            </div>
            {items.map((i) => (
              <div key={i} className="flex h-14 items-start justify-between pl-[8px] pr-2 pt-1">
                <span className={`text-[26px] leading-[40px] ${i.includes("Coefficient") ? "tracking-[0.62px]" : "tracking-[0.22px]"}`}>{i}</span>
                <div className="flex text-[22px]">
                  <div className="flex h-10 w-[66px] items-center justify-center border-2 border-[#b0b0b0] bg-linear-to-b from-[#e6e6e6] to-[#f6f6f6] pb-px">Run</div>
                  <div className="flex h-10 w-[56px] items-center justify-center border-2 border-l-[#dadada] border-[#dadada] bg-linear-to-b from-[#f1f1f1] to-[#fafafa]">
                    <span className="mb-[2px] mr-[2px] flex h-[18px] w-[18px] items-center justify-center rounded-full bg-[#a3a3a3] text-[13px] font-bold leading-none text-[#848484]">?</span>
                  </div>
                </div>
              </div>
            ))}
          </div>
        ))}
      </div>
    </section>
  );
}

export default function App() {
  return (
    <div className="flex h-[1772px] w-[3030px] overflow-hidden bg-[#656565] font-['Noto_Sans','Open_Sans',sans-serif] text-black">
      <div className="flex w-[6px] shrink-0 flex-col">
        <div className="h-[55px] border-b-2 border-black bg-[#2b2b2d]" />
        <div className="h-[131px] bg-[#cbcbcb]" />
        <div className="h-[108px] bg-[#2d4a63]" />
        <div className="flex-1 bg-[#cdcdcd]" />
      </div>
      <div className="flex flex-1 flex-col">
        <div className="flex h-[22px] shrink-0 justify-between bg-white">
          <div className="h-full w-[640px] bg-[repeating-linear-gradient(135deg,#fff_0px,#fff_15.500px,#d4d4d4_15.500px,#d4d4d4_17px)] [mask-image:linear-gradient(to_right,black,transparent)]" />
          <svg width="310" height="22" viewBox="2720 0 310 22" fill="none" stroke="#030808" strokeWidth="5">
            <path d="M2734 23C2738 -6 2786 -8 2798 23M2802 -2C2812 18 2850 18 2866 -3" />
            <path d="M2877 0h22l-2 22h-28zM2928 0h13l-3 22h-14zM2976 0h19l-4 22h-19z" fill="#030808" stroke="none" />
          </svg>
        </div>
        <div className="flex h-[42px] shrink-0 items-start justify-between border-b-2 border-[#484848] bg-[#656565] pt-px">
          <Tab label="Workspace 1" w="w-[231px]" x="pl-[6px]" gap="gap-[14px]" icon={
            <svg width="32" height="28" viewBox="0 0 32 28" className="-mr-[6px]"><rect x="1" y="1" width="29" height="24" fill="#fff" stroke="#c9c9c9" strokeWidth="1.500" /><rect x="1" y="1" width="29" height="4" fill="#d8d8d8" /><rect x="27" y="1" width="3" height="4" fill="#d33" /></svg>
          } />
          <NavButtons />
        </div>
        <div className="h-[4px] shrink-0 border-b-2 border-[#383838] bg-[#e2e2e2]" />
        <div className="flex flex-1 border-b-[6px] border-[#656565] pl-[6px] pr-[6px] pt-[6px]">
          <div className="flex w-[602px] flex-col"><Appearance /><LayoutPanel /></div>
          <Center />
          <RightColumn />
        </div>
        <div className="h-1 shrink-0 border-t-2 border-[#333] bg-[#d0d0d0]" />
      </div>
    </div>
  );
}
